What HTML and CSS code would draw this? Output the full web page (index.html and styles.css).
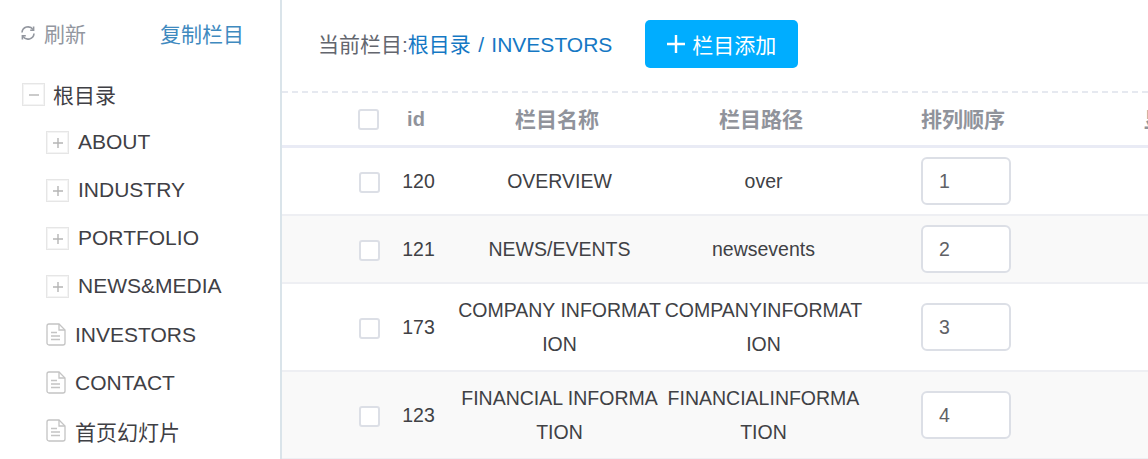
FILE: index.html
```html
<!DOCTYPE html>
<html lang="zh">
<head>
<meta charset="utf-8">
<title>栏目管理</title>
<link rel="stylesheet" href="styles.css">
</head>
<body>
<div class="app">
  <aside class="side">
    <div class="side-top">
      <a class="refresh">
        <svg class="refresh-icon" viewBox="0 0 16 16" width="16" height="16"><path d="M2 7.5A6 6 0 0 1 13 4.6M14 8.5A6 6 0 0 1 3 11.4" fill="none" stroke="#93979f" stroke-width="1.6"/><path d="M13.6 1.6v3.6h-3.4M2.4 14.4v-3.6h3.4" fill="none" stroke="#93979f" stroke-width="1.6"/></svg>
        <span>刷新</span>
      </a>
      <a class="copy">复制栏目</a>
    </div>
    <ul class="tree">
      <li class="node root"><span class="box"><svg viewBox="0 0 22 22" width="22" height="22"><path d="M6 11h10" stroke="#b5b5b5" stroke-width="1.4"/></svg></span><span class="label">根目录</span></li>
      <li class="node"><span class="box"><svg viewBox="0 0 22 22" width="22" height="22"><path d="M6 11h10M11 6v10" stroke="#b5b5b5" stroke-width="1.4"/></svg></span><span class="label">ABOUT</span></li>
      <li class="node"><span class="box"><svg viewBox="0 0 22 22" width="22" height="22"><path d="M6 11h10M11 6v10" stroke="#b5b5b5" stroke-width="1.4"/></svg></span><span class="label">INDUSTRY</span></li>
      <li class="node"><span class="box"><svg viewBox="0 0 22 22" width="22" height="22"><path d="M6 11h10M11 6v10" stroke="#b5b5b5" stroke-width="1.4"/></svg></span><span class="label">PORTFOLIO</span></li>
      <li class="node"><span class="box"><svg viewBox="0 0 22 22" width="22" height="22"><path d="M6 11h10M11 6v10" stroke="#b5b5b5" stroke-width="1.4"/></svg></span><span class="label">NEWS&amp;MEDIA</span></li>
      <li class="node leaf"><svg class="file" viewBox="0 0 20 23" width="20" height="23"><path d="M1 3a2 2 0 0 1 2-2h10l6 6v13a2 2 0 0 1-2 2H3a2 2 0 0 1-2-2z" fill="#fff" stroke="#c4c4c4" stroke-width="1.3"/><path d="M13 1v6h6M5 9.5h6M5 13h9M5 16.5h9" fill="none" stroke="#c4c4c4" stroke-width="1.3"/></svg><span class="label">INVESTORS</span></li>
      <li class="node leaf"><svg class="file" viewBox="0 0 20 23" width="20" height="23"><path d="M1 3a2 2 0 0 1 2-2h10l6 6v13a2 2 0 0 1-2 2H3a2 2 0 0 1-2-2z" fill="#fff" stroke="#c4c4c4" stroke-width="1.3"/><path d="M13 1v6h6M5 9.5h6M5 13h9M5 16.5h9" fill="none" stroke="#c4c4c4" stroke-width="1.3"/></svg><span class="label">CONTACT</span></li>
      <li class="node leaf"><svg class="file" viewBox="0 0 20 23" width="20" height="23"><path d="M1 3a2 2 0 0 1 2-2h10l6 6v13a2 2 0 0 1-2 2H3a2 2 0 0 1-2-2z" fill="#fff" stroke="#c4c4c4" stroke-width="1.3"/><path d="M13 1v6h6M5 9.5h6M5 13h9M5 16.5h9" fill="none" stroke="#c4c4c4" stroke-width="1.3"/></svg><span class="label">首页幻灯片</span></li>
    </ul>
  </aside>
  <main class="main">
    <div class="bar">
      <div class="crumb">当前栏目:<a>根目录</a><a class="sep"> / </a><a>INVESTORS</a></div>
      <button class="add"><svg viewBox="0 0 18 18" width="18" height="18"><path d="M9 0v18M0 9h18" stroke="#fff" stroke-width="2.4"/></svg><span>栏目添加</span></button>
    </div>
    <table class="grid">
      <colgroup>
        <col class="c-check"><col class="c-id"><col class="c-name"><col class="c-path"><col class="c-order"><col class="c-show">
      </colgroup>
      <thead>
        <tr><th class="check"><span class="cb"></span></th><th class="th-id">id</th><th class="th-mid">栏目名称</th><th class="th-mid">栏目路径</th><th class="order">排列顺序</th><th>显示状态</th></tr>
      </thead>
      <tbody>
        <tr class="r0"><td class="check"><span class="cb"></span></td><td>120</td><td>OVERVIEW</td><td class="path">over</td><td class="order"><span class="num">1</span></td><td></td></tr>
        <tr class="r1 alt"><td class="check"><span class="cb"></span></td><td>121</td><td>NEWS/EVENTS</td><td class="path">newsevents</td><td class="order"><span class="num">2</span></td><td></td></tr>
        <tr class="r2"><td class="check"><span class="cb"></span></td><td>173</td><td>COMPANY INFORMATION</td><td class="path">COMPANYINFORMATION</td><td class="order"><span class="num">3</span></td><td></td></tr>
        <tr class="r2 alt"><td class="check"><span class="cb"></span></td><td>123</td><td>FINANCIAL INFORMATION</td><td class="path">FINANCIALINFORMATION</td><td class="order"><span class="num">4</span></td><td></td></tr>
      </tbody>
    </table>
  </main>
</div>
</body>
</html>
```
FILE: styles.css
```css
* { box-sizing: border-box; }
html, body { margin: 0; height: 459px; overflow: hidden; background: #fff; }
body { font-family: "Liberation Sans", "Noto Sans CJK SC", sans-serif; font-size: 21px; color: #3f4045; }
.app { display: flex; width: 1148px; height: 459px; overflow: hidden; }
.side { flex: 0 0 282px; border-right: 2px solid #dae4ea; }
.side-top { display: flex; justify-content: space-between; align-items: center; height: 34px; margin-top: 16px; padding: 0 36px 0 20px; }
.refresh { display: flex; align-items: center; gap: 8px; color: #93979f; }
.refresh-icon { display: block; }
.copy { color: #3f8abf; }
.tree { list-style: none; margin: 20px 0 0; padding: 0 0 0 22px; }
.node { display: flex; align-items: center; height: 48px; padding-left: 24px; }
.node.root { padding-left: 0; }
.box { display: block; width: 23px; height: 23px; border: 1px solid #e6e6e6; box-shadow: inset 0 0 0 1px #f4f4f4; margin-right: 9px; }
.box svg { display: block; }
.file { flex: none; margin-right: 9px; }
.leaf .label { margin-top: 2px; }
.root .box { margin-right: 8px; }
.main { flex: 1; min-width: 0; }
.bar { display: flex; align-items: center; height: 93px; padding: 0 0 3px 36px; border-bottom: 2px dashed #e6e9f0; }
.crumb { margin-bottom: 2px; color: #63666e; }
.crumb a { color: #1578c4; }
.crumb .sep { margin: 0 1.5px; }
.add { display: flex; align-items: center; gap: 7px; margin-left: 33px; width: 153px; height: 48px; padding: 0 0 0 22px; border: 0; border-radius: 5px; background: #00adff; color: #fff; font: inherit; }
.add svg { display: block; }
.grid { width: 1025px; table-layout: fixed; border-collapse: separate; border-spacing: 0; }
.c-check { width: 98px; }
.c-id { width: 77px; }
.c-name { width: 205px; }
.c-path { width: 203px; }
.c-order { width: 200px; }
.c-show { width: 242px; }
th { height: 55px; padding: 0 0 2px; font-size: 21px; font-weight: 700; color: #90939b; text-align: center; white-space: nowrap; border-bottom: 3px solid #e9ebf5; }
.th-id { font-size: 20px; padding: 0 5px 0 0; }
.th-mid { padding-right: 5px; }
td { padding: 0; text-align: center; font-size: 19.5px; line-height: 34px; color: #404145; word-break: break-all; border-bottom: 2px solid #eeeff3; }
td.path { padding: 0 2px; }
.r0 td { height: 68px; }
.r1 td { height: 68px; }
.r2 td { height: 88px; }
.alt td { background: #f9f9f9; }
th.check, td.check { text-align: right; padding-right: 0; }
.cb { display: inline-block; width: 21px; height: 21px; vertical-align: middle; border: 2px solid #dcdfe6; border-radius: 3px; background: #fff; }
th .cb { margin-right: 1px; }
th.order, td.order { text-align: left; padding-left: 56px; }
.num { display: inline-block; width: 90px; height: 48px; padding-left: 16px; vertical-align: middle; text-align: left; line-height: 44px; color: #5f6166; background: #fff; border: 2px solid #dcdfe6; border-radius: 6px; }
```
